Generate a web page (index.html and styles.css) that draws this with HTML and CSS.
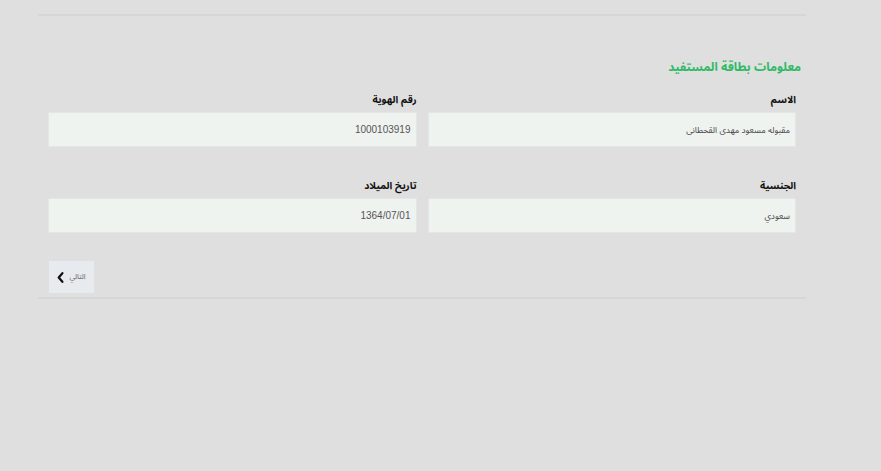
FILE: index.html
```html
<!DOCTYPE html>
<html lang="ar" dir="rtl">
<head>
<meta charset="utf-8">
<title>معلومات بطاقة المستفيد</title>
<link rel="stylesheet" href="styles.css">
</head>
<body>
<div class="page">
  <div class="rule"></div>
  <section class="card">
    <h2 class="title">معلومات بطاقة المستفيد</h2>
    <div class="fields">
      <div class="field">
        <label class="label">الاسم</label>
        <div class="input">مقبوله مسعود مهدى القحطانى</div>
      </div>
      <div class="field">
        <label class="label">رقم الهوية</label>
        <div class="input num">1000103919</div>
      </div>
      <div class="field">
        <label class="label">الجنسية</label>
        <div class="input">سعودي</div>
      </div>
      <div class="field">
        <label class="label">تاريخ الميلاد</label>
        <div class="input num">1364/07/01</div>
      </div>
    </div>
    <div class="actions">
      <button class="btn" type="button"><span class="btn-text">التالي</span><svg class="chev" width="7" height="11" viewBox="0 0 7 11"><path d="M5.4 1.2 L1.7 5.5 L5.4 9.8" fill="none" stroke="#111" stroke-width="2.2" stroke-linecap="round" stroke-linejoin="round"/></svg></button>
    </div>
  </section>
  <div class="rule"></div>
</div>
</body>
</html>
```
FILE: styles.css
```css
html, body {
  margin: 0;
  padding: 0;
  background: #dfdfdf;
}
body {
  font-family: "Liberation Sans", "Noto Sans Arabic", "DejaVu Sans", sans-serif;
  color: #222;
}
.page {
  width: 768px;
  margin-left: auto;
  margin-right: 75px;
  padding-top: 14px;
}
.rule {
  height: 2px;
  background: #d4d7d5;
}
.card {
  padding: 41px 10px 4px 10px;
}
.title {
  margin: 0 -5px 15px 0;
  font-size: 12px;
  line-height: 20px;
  font-weight: bold;
  color: #2fba66;
}
.fields {
  display: grid;
  grid-template-columns: 1fr 1fr;
  column-gap: 11px;
  row-gap: 31px;
}
.field {
  display: flex;
  flex-direction: column;
}
.label {
  font-size: 10px;
  line-height: 16px;
  font-weight: bold;
  color: #111;
  margin-bottom: 4px;
}
.input {
  box-sizing: border-box;
  height: 35px;
  background: #eff3f0;
  border: 1px solid #e3e6e4;
  padding: 0 5px;
  display: flex;
  align-items: center;
  font-size: 8.5px;
  color: #444;
}
.input.num {
  font-size: 10px;
  color: #555;
}
.actions {
  margin-top: 28px;
  display: flex;
  justify-content: flex-end;
}
.btn {
  box-sizing: border-box;
  width: 45px;
  height: 32px;
  margin-left: 1px;
  border: none;
  background: #e7eaee;
  display: flex;
  align-items: center;
  justify-content: center;
  gap: 5px;
  padding: 0;
  font-family: inherit;
  cursor: pointer;
}
.btn-text {
  font-size: 7.5px;
  color: #666;
}
.chev {
  display: block;
}
```
